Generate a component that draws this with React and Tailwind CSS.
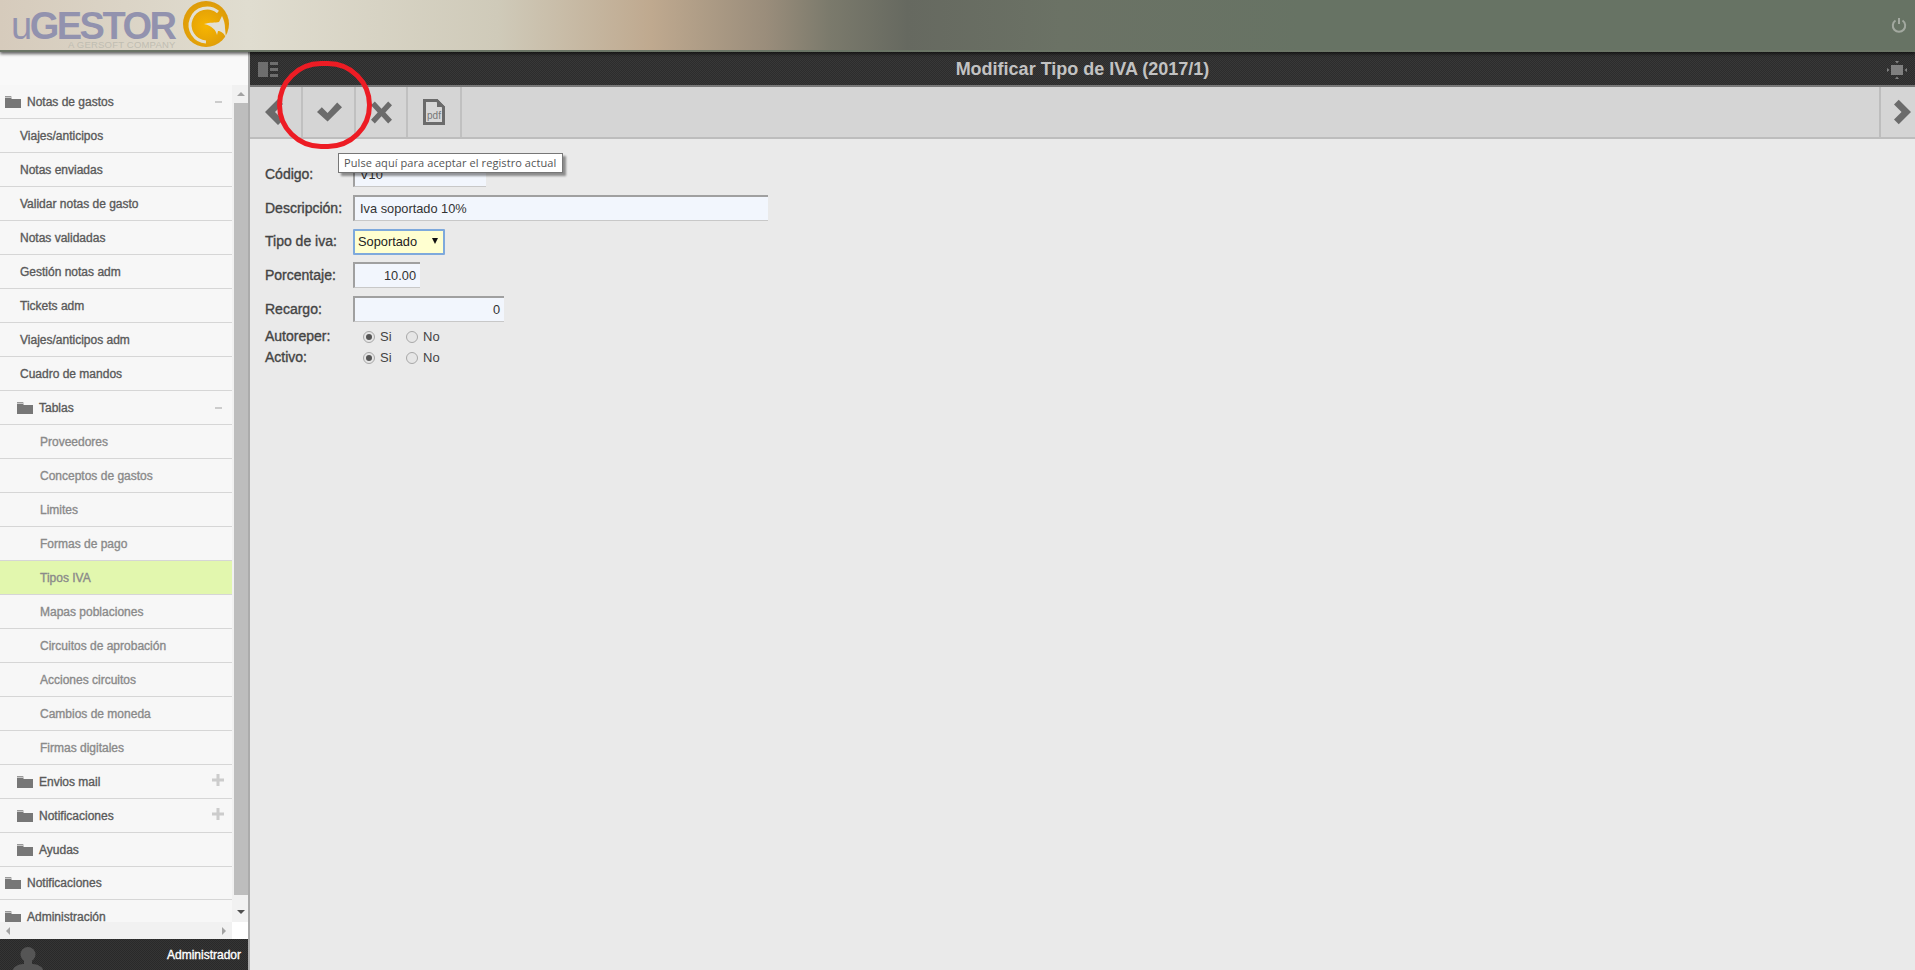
import React from "react";

const semi = "[-webkit-text-stroke:0.35px_currentColor]";

const Folder = ({ className = "" }) => (
  <svg viewBox="0 0 16 12" className={`w-[16px] h-[12px] shrink-0 ${className}`}>
    <path d="M0 0h6l1 1.500H0z" fill="#999" />
    <path d="M0 2h6l1 1h9v9H0z" fill="#777" />
  </svg>
);

const Row = ({ label, level = 0, folder, mark, active, sub, short }) => (
  <div
    className={`${short ? "h-[33px]" : "h-[34px]"} shrink-0 flex items-center relative border-b border-[#d6d6d6] text-[12px] ${semi} ${active ? "bg-[#e2f7ae]" : ""} ${sub ? "text-[#8a8a8a]" : "text-[#5a5a5a]"}`}
    style={{ paddingLeft: level === 0 ? 5 : level === 1 ? (folder ? 17 : 20) : 40 }}
  >
    {folder && <Folder className="mr-[6px]" />}
    <span>{label}</span>
    {mark === "-" && <span className="absolute right-[10px] top-[16px] w-[7px] h-[2px] bg-[#ccc]" />}
    {mark === "+" && (
      <svg viewBox="0 0 12 12" className="absolute right-[8px] top-[9px] w-[12px] h-[12px]">
        <path d="M4.500 0h3v4.500H12v3H7.500V12h-3V7.500H0v-3h4.500z" fill="#ccc" />
      </svg>
    )}
  </div>
);

const items = [
  { label: "Notas de gastos", folder: true, mark: "-" },
  { label: "Viajes/anticipos", level: 1 },
  { label: "Notas enviadas", level: 1 },
  { label: "Validar notas de gasto", level: 1 },
  { label: "Notas validadas", level: 1 },
  { label: "Gestión notas adm", level: 1 },
  { label: "Tickets adm", level: 1 },
  { label: "Viajes/anticipos adm", level: 1 },
  { label: "Cuadro de mandos", level: 1 },
  { label: "Tablas", level: 1, folder: true, mark: "-" },
  { label: "Proveedores", level: 2, sub: true },
  { label: "Conceptos de gastos", level: 2, sub: true },
  { label: "Limites", level: 2, sub: true },
  { label: "Formas de pago", level: 2, sub: true },
  { label: "Tipos IVA", level: 2, sub: true, active: true },
  { label: "Mapas poblaciones", level: 2, sub: true },
  { label: "Circuitos de aprobación", level: 2, sub: true },
  { label: "Acciones circuitos", level: 2, sub: true },
  { label: "Cambios de moneda", level: 2, sub: true },
  { label: "Firmas digitales", level: 2, sub: true },
  { label: "Envios mail", level: 1, folder: true, mark: "+" },
  { label: "Notificaciones", level: 1, folder: true, mark: "+" },
  { label: "Ayudas", level: 1, folder: true },
  { label: "Notificaciones", folder: true, short: true },
  { label: "Administración", folder: true },
];

const ToolBtn = ({ children, w = "w-[53px]" }) => (
  <div className={`${w} shrink-0 h-full flex items-center justify-center border-r-2 border-[#c0c0c0]`}>{children}</div>
);

const Field = ({ label, children, h = "h-[34px]" }) => (
  <div className={`flex items-center ${h}`}>
    <span className={`w-[88px] shrink-0 text-[14px] text-[#444] ${semi}`}>{label}</span>
    {children}
  </div>
);

const inputCls =
  "h-[26px] bg-[#f2f6fd] border-t-[2px] border-l-[2px] border-b border-[#a0a0a0] border-b-[#c8c8c8] flex items-center text-[12.8px] text-[#333]";

const Radio = ({ on }) => (
  <span className="w-[12px] h-[12px] rounded-full border border-[#a8a8a8] bg-[#e6e6e6] flex items-center justify-center shrink-0">
    {on && <span className="w-[6px] h-[6px] rounded-full bg-[#555]" />}
  </span>
);

const RadioRow = ({ label }) => (
  <div className="flex items-center h-[21px]">
    <span className={`w-[98px] shrink-0 text-[14px] text-[#444] ${semi}`}>{label}</span>
    <Radio on />
    <span className="ml-[5px] w-[26px] text-[13px] text-[#444]">Si</span>
    <Radio />
    <span className="ml-[5px] text-[13px] text-[#444]">No</span>
  </div>
);

export default function App() {
  return (
    <div className="relative w-[1915px] h-[970px] overflow-hidden flex flex-col bg-[#eaeaea] font-['Liberation_Sans',Arial,sans-serif]">
      <header className="h-[52px] shrink-0 relative z-10 flex items-center justify-between border-b-[2px] border-[#6b7566] shadow-[0_2px_3px_rgba(0,0,0,0.6)] bg-[linear-gradient(90deg,#d6cbbc_0%,#e0ddd0_13%,#cfcab9_26%,#bfa98f_34%,#9a8d7b_40%,#7b7a6c_43.300%,#666960_47.400%,#6b7265_55.400%,#677364_68%,#677364_100%)]">
        <div className="relative flex items-center h-full pl-[11px]">
          <span className="block mt-[1px] text-[38px] leading-[28px] tracking-[-2.5px] text-[#9292ae] font-bold">
            <span className="font-normal">u</span>GESTOR
          </span>
          <span className="absolute left-[68px] top-[40px] text-[9.5px] leading-none text-[#c0bdb2] whitespace-nowrap tracking-[0.2px]">A GERSOFT COMPANY</span>
          <svg viewBox="0 0 48 48" className="ml-[8px] w-[48px] h-[48px] mb-[3px]">
            <defs>
              <radialGradient id="lg" cx="50%" cy="55%" r="55%">
                <stop offset="0%" stopColor="#f7b500" />
                <stop offset="100%" stopColor="#dc9a0a" />
              </radialGradient>
            </defs>
            <circle cx="24" cy="24" r="23" fill="url(#lg)" />
            <path d="M36 12 A17 17 0 1 0 24 42" fill="none" stroke="#e3e0d3" strokeWidth="3" />
            <path d="M22 24 C28 22 33 23 37 22 L40 16 C42 20 43 24 43 28 L44 38 C42 33 39 31 36 31 L35 35 C34 30 30 26 22 24 Z" fill="#e3e0d3" />
          </svg>
        </div>
        <svg viewBox="0 0 16 16" className="w-[16px] h-[16px] mr-[8px]" fill="none" stroke="#a3a9a0" strokeWidth="2">
          <path d="M4.500 3.500a6.200 6.200 0 1 0 7 0" />
          <path d="M8 1v6" />
        </svg>
      </header>

      <div className="flex-1 flex min-h-0">
        <aside className="w-[250px] shrink-0 flex flex-col bg-[#f7f7f7] border-r-[2px] border-[#ababab]">
          <div className="h-[33px] shrink-0 bg-[#f9f9f9]" />
          <div className="flex-1 min-h-0 flex">
            <div className="flex-1 min-w-0 flex flex-col">
              <div className="flex-1 min-h-0 overflow-hidden flex flex-col">
                {items.map((it, i) => (
                  <Row key={i} {...it} />
                ))}
              </div>
              <div className="h-[17px] shrink-0 flex items-center justify-between px-[6px] bg-[#f1f1f1]">
                <span className="border-y-[4px] border-y-transparent border-r-[4px] border-r-[#a3a3a3]" />
                <span className="border-y-[4px] border-y-transparent border-l-[4px] border-l-[#a3a3a3]" />
              </div>
            </div>
            <div className="w-[16px] shrink-0 flex flex-col bg-[#f1f1f1] pl-[2px]">
              <div className="h-[18px] shrink-0 flex items-center justify-center">
                <span className="border-x-[4px] border-x-transparent border-b-[4px] border-b-[#a3a3a3]" />
              </div>
              <div className="flex-1 bg-[#bdbdbd]" />
              <div className="h-[27px] shrink-0 flex items-center justify-center bg-[#f1f1f1]">
                <span className="border-x-[4px] border-x-transparent border-t-[4px] border-t-[#505050] mt-[7px]" />
              </div>
              <div className="h-[17px] shrink-0 bg-white -ml-[2px]" />
            </div>
          </div>
          <div className="h-[31px] shrink-0 bg-[#2e2e2e] bg-[repeating-conic-gradient(#292929_0%_25%,#353535_0%_50%)] bg-[length:2px_2px] flex items-end justify-between pr-[7px] overflow-hidden">
            <svg viewBox="0 0 32 31" className="ml-[12px] w-[32px] h-[31px]" fill="#555">
              <circle cx="16" cy="15.500" r="7.500" />
              <path d="M12 20h8v6h-8z" />
              <path d="M1 31c0-3 6-6 10-6h10c4 0 10 3 10 6z" />
            </svg>
            <span className={`mb-[6px] text-[12px] text-white ${semi}`}>Administrador</span>
          </div>
        </aside>

        <main className="flex-1 min-w-0 flex flex-col">
          <div className="h-[35px] shrink-0 pt-[2px] bg-[#333] bg-[repeating-conic-gradient(#2c2c2c_0%_25%,#383838_0%_50%)] bg-[length:2px_2px] border-b-[2px] border-[#777] flex items-center justify-between px-[8px]">
            <svg viewBox="0 0 20 15" className="w-[20px] h-[15px]" fill="#6e6e6e">
              <path d="M0 0h10v15H0zM12 0h8v3h-8zM12 6h8v3h-8zM12 12h8v3h-8z" />
            </svg>
            <span className="text-[18px] font-bold text-[#c2c2c2]">Modificar Tipo de IVA (2017/1)</span>
            <svg viewBox="0 0 20 18" className="w-[20px] h-[18px]" fill="#808080">
              <path d="M4 4h12v10H4zM8 0h4L10 2.500zM8 18h4l-2-2.500zM0 7v4l2.500-2zM20 7v4l-2.500-2z" />
            </svg>
          </div>
          <div className="h-[52px] shrink-0 flex bg-[#d5d5d5] border-b-[2px] border-b-[#bdbdbd]">
            <ToolBtn>
              <svg viewBox="0 0 20 26" className="w-[20px] h-[26px] -ml-[4px]" fill="#6b6b6b"><path d="M14 0l5 5-8 8 8 8-5 5L1 13z" /></svg>
            </ToolBtn>
            <ToolBtn>
              <svg viewBox="0 0 26 20" className="w-[25px] h-[20px] ml-[1px]" fill="#6b6b6b"><path d="M21 0l5 5-15 15L0 10l5-5 6 6z" /></svg>
            </ToolBtn>
            <ToolBtn w="w-[52px]">
              <svg viewBox="0 0 22 23" className="w-[21px] h-[23px]" fill="#6b6b6b"><path d="M4 0l7 7.500 7-7.500 4 4-7 7.500 7 7.500-4 4-7-7.500-7 7.500-4-4 7-7.500-7-7.500z" /></svg>
            </ToolBtn>
            <ToolBtn w="w-[54px]">
              <svg viewBox="0 0 22 26" className="w-[22px] h-[26px]">
                <path d="M1.500 1.500h12.500l6.500 6.500v16.500H1.500z" fill="#d8d8d8" stroke="#6b6b6b" strokeWidth="3" />
                <path d="M14 0v8h8z" fill="#6b6b6b" />
                <path d="M15 0l7 7V0z" fill="#d5d5d5" />
                <text x="11" y="20" textAnchor="middle" fontSize="10" fontFamily="Liberation Sans" fill="#777">pdf</text>
              </svg>
            </ToolBtn>
            <div className="flex-1" />
            <div className="w-[36px] shrink-0 h-full flex items-center justify-center border-l-2 border-[#bdbdbd]">
              <svg viewBox="0 0 18 26" className="w-[17px] h-[26px] ml-[8px]" fill="#6b6b6b"><path d="M5 0L18 13 5 26 0 21l8-8-8-8z" /></svg>
            </div>
          </div>

          <div className="pl-[15px] pt-[18px] flex flex-col">
            <Field label="Código:">
              <div className={`${inputCls} w-[133px] pl-[5px]`}>V10</div>
            </Field>
            <Field label="Descripción:">
              <div className={`${inputCls} w-[415px] pl-[5px]`}>Iva soportado 10%</div>
            </Field>
            <Field label="Tipo de iva:" h="h-[33px]">
              <div className="w-[92px] h-[26px] bg-[#ffffd0] border-2 border-[#7ea9dc] rounded-[1px] flex items-center justify-between pl-[3px] pr-[5px] text-[12.8px] text-[#222]">
                <span>Soportado</span>
                <span className="border-x-[3.500px] border-x-transparent border-t-[6px] border-t-[#111] mb-[2px]" />
              </div>
            </Field>
            <Field label="Porcentaje:">
              <div className={`${inputCls} w-[67px] justify-end pr-[4px]`}>10.00</div>
            </Field>
            <Field label="Recargo:">
              <div className={`${inputCls} w-[151px] justify-end pr-[4px]`}>0</div>
            </Field>
            <RadioRow label="Autoreper:" />
            <RadioRow label="Activo:" />
          </div>
        </main>
      </div>

      <div className="absolute left-[338px] top-[153px] h-[20px] w-[225px] flex items-center pl-[5px] bg-white border border-[#777] shadow-[3px_3px_2px_rgba(0,0,0,0.4)] text-[11px] tracking-[0.08px] text-[#555] whitespace-nowrap z-20 font-['Open_Sans',sans-serif]">
        Pulse aquí para aceptar el registro actual
      </div>
      <div className="absolute left-[277px] top-[61px] w-[95px] h-[88px] rounded-full border-[5px] border-[#ed1c24] z-30" />
    </div>
  );
}
